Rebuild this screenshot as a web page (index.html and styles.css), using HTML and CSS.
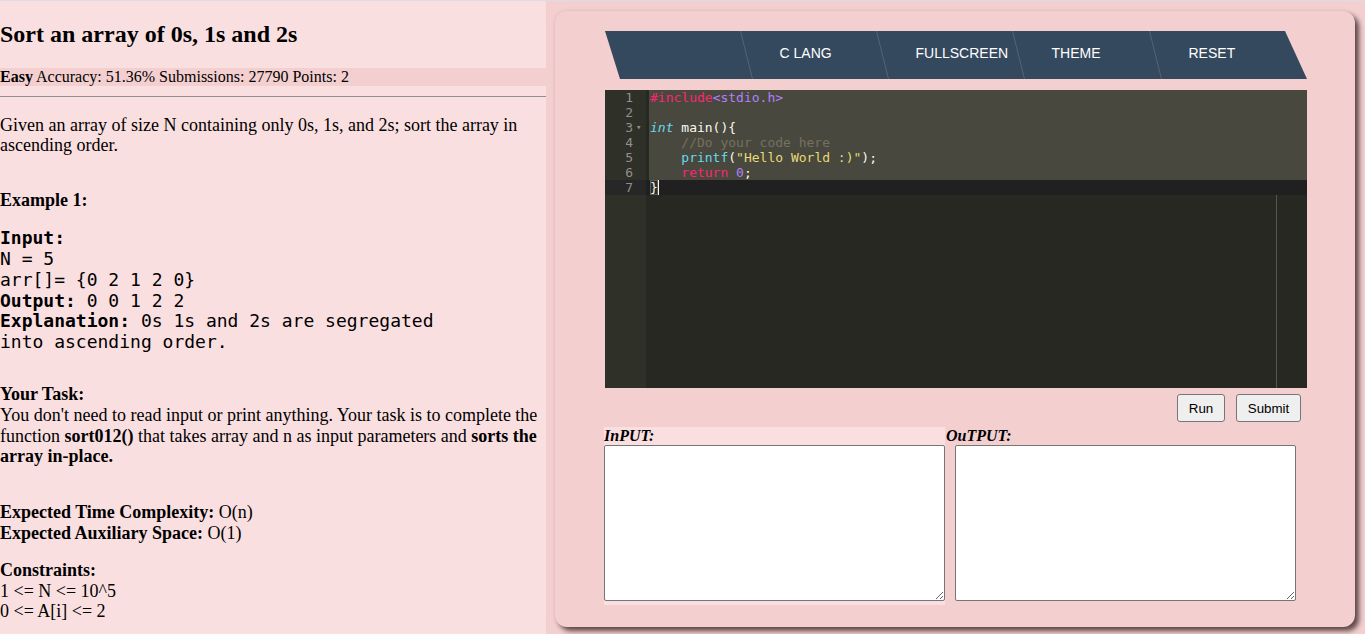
FILE: index.html
```html
<!DOCTYPE html>
<html>
<head>
<meta charset="utf-8">
<title>Sort an array of 0s, 1s and 2s</title>
<link rel="stylesheet" href="styles.css">
</head>
<body>
<div class="problem">
  <h2 class="title">Sort an array of 0s, 1s and 2s</h2>
  <div class="meta"><b>Easy</b> Accuracy: 51.36% Submissions: 27790 Points: 2</div>
  <hr class="rule">
  <p class="desc">Given an array of size N containing only 0s, 1s, and 2s; sort the array in ascending order.</p>
  <p class="example"><b>Example 1:</b></p>
  <pre class="sample"><b>Input:</b>
N = 5
arr[]= {0 2 1 2 0}
<b>Output:</b> 0 0 1 2 2
<b>Explanation:</b> 0s 1s and 2s are segregated
into ascending order.</pre>
  <p class="task"><b>Your Task:</b><br>You don't need to read input or print anything. Your task is to complete the function <b>sort012()</b> that takes array and n as input parameters and <b>sorts the array in-place.</b></p>
  <p class="complexity"><b>Expected Time Complexity:</b> O(n)<br><b>Expected Auxiliary Space:</b> O(1)</p>
  <p class="constraints"><b>Constraints:</b><br>1 &lt;= N &lt;= 10^5<br>0 &lt;= A[i] &lt;= 2</p>
</div>
<div class="workspace">
  <div class="card">
    <nav class="menu">
      <div class="menu-item first"></div>
      <div class="menu-item w136"><span>C LANG</span></div>
      <div class="menu-item w136"><span>FULLSCREEN</span></div>
      <div class="menu-item w137"><span>THEME</span></div>
      <div class="menu-item last"><span>RESET</span></div>
    </nav>
    <div class="editor">
      <div class="gutter">
        <div class="gcell"><span>1</span><i></i></div>
        <div class="gcell"><span>2</span><i></i></div>
        <div class="gcell"><span>3</span><i class="fold">▾</i></div>
        <div class="gcell"><span>4</span><i></i></div>
        <div class="gcell"><span>5</span><i></i></div>
        <div class="gcell"><span>6</span><i></i></div>
        <div class="gcell active"><span>7</span><i></i></div>
      </div>
      <div class="code">
        <div class="print-margin"></div>
        <div class="line sel"><span class="kw">#include</span><span class="num">&lt;stdio.h&gt;</span></div>
        <div class="line sel"> </div>
        <div class="line sel"><span class="type">int</span> main(){</div>
        <div class="line sel">    <span class="cm">//Do your code here</span></div>
        <div class="line sel">    <span class="fn">printf</span>(<span class="str">"Hello World :)"</span>);</div>
        <div class="line sel">    <span class="kw">return</span> <span class="num">0</span>;</div>
        <div class="line cur"><span class="match">}</span><span class="caret"></span></div>
      </div>
    </div>
    <div class="actions">
      <button class="btn run">Run</button>
      <button class="btn submit">Submit</button>
    </div>
    <div class="io">
      <div class="io-box in">
        <div class="io-label">InPUT:</div>
        <textarea class="io-text"></textarea>
      </div>
      <div class="io-box out">
        <div class="io-label">OuTPUT:</div>
        <textarea class="io-text"></textarea>
      </div>
    </div>
  </div>
</div>
</body>
</html>
```

FILE: styles.css
```css
html, body {
  margin: 0;
  padding: 0;
}
body {
  display: flex;
  height: 634px;
  box-sizing: border-box;
  border-top: 1px solid #dcdde4;
  overflow: hidden;
  font-family: "Liberation Serif", "Times New Roman", serif;
  color: #000;
}

/* ---------- left problem panel ---------- */
.problem {
  width: 546px;
  flex-shrink: 0;
  background: #fadfe0;
  font-size: 18px;
  line-height: 20.8px;
}
.title {
  margin: 20px 0 20px;
  font-size: 24px;
  line-height: 26.6px;
  font-weight: bold;
}
.meta {
  background: #f3cfd0;
  font-size: 16px;
  line-height: 18px;
}
.rule {
  margin: 10px 0 0;
  border: 0;
  border-top: 1px solid #8f8f8f;
  height: 0;
}
.desc {
  margin: 18px 0 0;
}
.example {
  margin: 34px 0 0;
}
.sample {
  margin: 17px 0 0;
  font-family: "DejaVu Sans Mono", monospace;
  font-size: 18px;
  line-height: 20.85px;
}
.task {
  margin: 31px 0 0;
}
.complexity {
  margin: 35px 0 0;
}
.constraints {
  margin: 16px 0 0;
}

/* ---------- right workspace ---------- */
.workspace {
  flex: 1;
  background: #f3cfd0;
  padding: 10px 0 0 9px;
}
.card {
  width: 800px;
  height: 616px;
  box-sizing: border-box;
  padding: 20px 0 0 50px;
  background: #f3cfd0;
  border-radius: 12px;
  box-shadow: 4px 4px 5px rgba(50, 30, 30, 0.75), 0 0 4px rgba(0, 0, 0, 0.08);
}

/* menu */
.menu {
  display: flex;
  width: 702px;
  height: 48px;
  background: #34495e;
  clip-path: polygon(0 0, 680px 0, 702px 48px, 15px 48px);
  overflow: hidden;
  font-family: "Liberation Sans", Arial, sans-serif;
  font-size: 14px;
  color: #fff;
}
.menu-item {
  height: 48px;
  box-sizing: border-box;
  transform: skewX(14deg);
  border-left: 1px solid rgba(255, 255, 255, 0.15);
  padding-left: 33px;
  line-height: 44px;
  white-space: nowrap;
}
.menu-item span {
  display: inline-block;
  transform: skewX(-14deg);
}
.menu-item.first {
  width: 141px;
  border-left: 0;
}
.menu-item.w136 { width: 136px; }
.menu-item.w137 { width: 137px; }
.menu-item.last { flex: 1; }

/* editor */
.editor {
  display: flex;
  width: 702px;
  height: 298px;
  margin-top: 11px;
  background: #272822;
  font-family: "DejaVu Sans Mono", monospace;
  font-size: 13px;
  line-height: 15px;
}
.gutter {
  width: 41px;
  flex-shrink: 0;
  background: #2f3129;
  color: #8f908a;
}
.gcell {
  display: flex;
  justify-content: flex-end;
  height: 15px;
}
.gcell i {
  width: 13px;
  font-style: normal;
  font-size: 9px;
  text-align: left;
  padding-left: 3px;
  box-sizing: border-box;
}
.gcell.active {
  background: #272727;
}
.code {
  flex: 1;
  position: relative;
  color: #f8f8f2;
}
.print-margin {
  position: absolute;
  left: 630px;
  top: 0;
  bottom: 0;
  width: 1px;
  background: #555651;
}
.line {
  position: relative;
  height: 15px;
  white-space: pre;
}
.line.sel {
  margin-left: 3px;
  padding-left: 1px;
  background: #49483e;
}
.line.cur {
  padding-left: 4px;
  background: #202020;
}
.kw { color: #f92672; }
.num { color: #ae81ff; }
.type { color: #66d9ef; font-style: italic; }
.fn { color: #66d9ef; }
.str { color: #e6db74; }
.cm { color: #75715e; }
.match {
  box-shadow: inset 0 0 0 1px #5c5c55;
  background: #2c2c28;
}
.caret {
  display: inline-block;
  width: 1px;
  height: 15px;
  vertical-align: top;
  background: #f8f8f0;
}

/* action buttons */
.actions {
  display: flex;
  justify-content: flex-end;
  gap: 11px;
  width: 702px;
  box-sizing: border-box;
  padding-right: 6px;
  margin-top: 6px;
}
.btn {
  height: 28px;
  box-sizing: border-box;
  padding: 0;
  background: #efefef;
  border: 1px solid #767676;
  border-radius: 3px;
  font-family: "Liberation Sans", Arial, sans-serif;
  font-size: 13.33px;
  color: #000;
}
.btn.run { width: 48px; }
.btn.submit { width: 65px; }

/* input / output */
.io {
  display: flex;
  margin-top: 5px;
  margin-left: -1px;
}
.io-box {
  width: 341px;
  font-size: 16px;
}
.io-box.in {
  background: #fadfe0;
}
.io-box.out {
  margin-left: 1px;
  width: 350px;
}
.io-label {
  font-weight: bold;
  font-style: italic;
  line-height: 18px;
  height: 18px;
}
.io-text {
  width: 341px;
  height: 156px;
  box-sizing: border-box;
  margin: 0;
  border: 1px solid #767676;
  border-radius: 2px;
  background: #fff;
  vertical-align: baseline;
}
.out .io-text {
  margin-left: 9px;
}
```
